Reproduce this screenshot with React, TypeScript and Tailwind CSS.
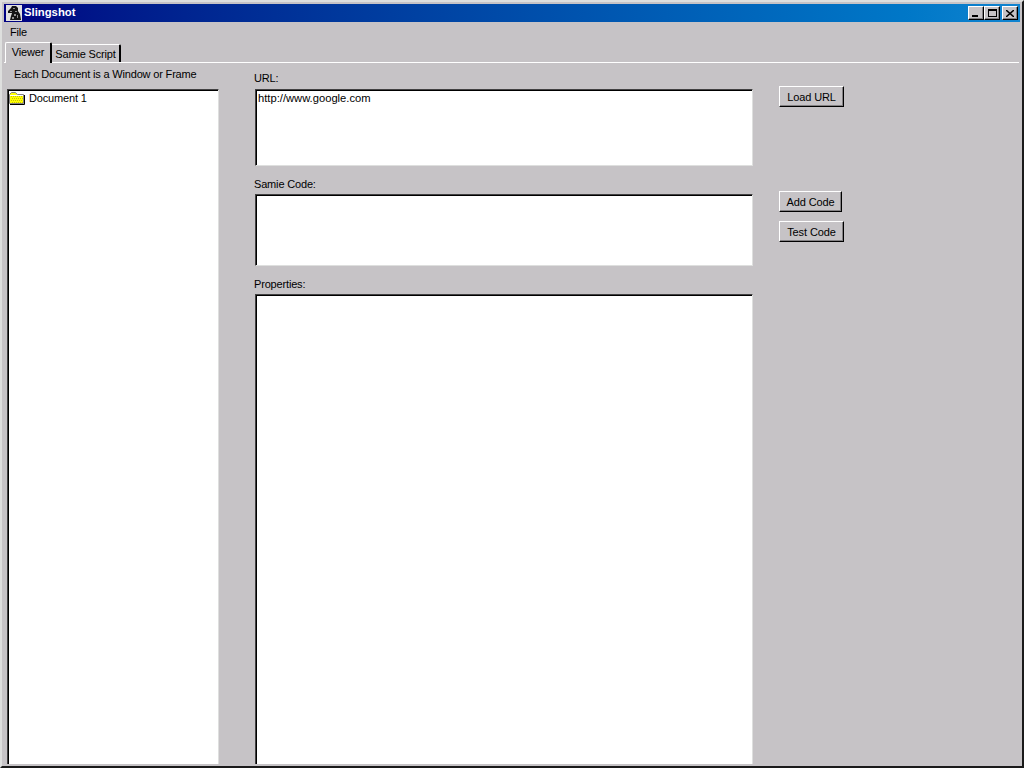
import React from 'react';

const raised =
  'border border-t-white border-l-white border-r-[#000000] border-b-[#000000] shadow-[inset_-1px_-1px_0_#848284]';
const sunken =
  'bg-white border border-t-[#424142] border-l-[#424142] border-r-[#dedfde] border-b-[#dedfde] shadow-[inset_1px_1px_0_#000000] pt-[1px] pl-[1px]';

const WinButton = ({ label, width }: { label: string; width: string }) => (
  <button className={`h-[21px] ${width} ${raised} bg-[#c6c3c6] text-[11px] tracking-[-0.1px] leading-[18px] text-black flex items-center justify-center whitespace-nowrap`}>
    {label}
  </button>
);

const CaptionButton = ({ children, className }: { children: React.ReactNode; className?: string }) => (
  <div className={`w-[16px] h-[14px] bg-[#c6c3c6] ${raised} flex items-center justify-center ${className ?? ''}`}>
    {children}
  </div>
);

const DogIcon = () => (
  <svg width="16" height="16" viewBox="0 0 16 16" className="shrink-0">
    <rect width="16" height="16" fill="#e0e0e0" />
    <path d="M2 6 L5 3 L6 1 L10 1 L12 3 L12 6 L14 9 L15 15 L4 15 L5 11 L6 8 L2 8 Z" fill="#141414" />
    <path d="M7 3h2v1H7zM4 6h2v1H4zM9 6h2v1H9zM8 9h2v2H8zM11 10h1v3h-1zM6 12h2v2H6z" fill="#909090" />
  </svg>
);

const FolderIcon = () => (
  <svg width="16" height="14" viewBox="0 0 16 14" className="shrink-0">
    <path d="M0.5 12.5 V3.5 L2.5 1.5 H6.5 L8.5 3.5 H14.5 V12.5 Z" fill="#ffff00" stroke="#848284" />
    <path d="M15.5 4 V13.5 H1" fill="none" stroke="#000000" />
    <path d="M1 4.5 H14" stroke="#ffffff" />
    <path d="M2 5h1v1H2zM4 5h1v1H4zM6 5h1v1H6zM8 5h1v1H8zM10 5h1v1h-1zM12 5h1v1h-1zM3 7h1v1H3zM5 7h1v1H5zM7 7h1v1H7zM9 7h1v1H9zM11 7h1v1h-1zM13 7h1v1h-1zM2 9h1v1H2zM4 9h1v1H4zM6 9h1v1H6zM8 9h1v1H8zM10 9h1v1h-1zM12 9h1v1h-1zM3 11h1v1H3zM5 11h1v1H5zM7 11h1v1H7zM9 11h1v1H9zM11 11h1v1h-1zM13 11h1v1h-1z" fill="#c6c300" />
  </svg>
);

export default function App() {
  return (
    <div
      className="w-[1024px] h-[768px] overflow-hidden bg-[#c6c3c6] text-black text-[11px] tracking-[-0.17px] border-2 border-t-[#dedfde] border-l-[#dedfde] border-r-[#1a1a1a] border-b-[#1a1a1a] p-[2px] pb-0 flex flex-col"
      style={{ fontFamily: '"Liberation Sans", Arial, sans-serif' }}
    >
      {/* title bar */}
      <div className="h-[18px] shrink-0 bg-gradient-to-r from-[#000082] to-[#1084d0] flex items-center pl-[2px] pr-[2px]">
        <DogIcon />
        <span className="ml-[2px] text-white font-bold text-[11.3px] tracking-normal leading-none">Slingshot</span>
        <div className="ml-auto flex items-center">
          <CaptionButton>
            <div className="w-[6px] h-[2px] bg-black mt-[6px] mr-[2px]" />
          </CaptionButton>
          <CaptionButton>
            <div className="w-[9px] h-[8px] border border-black border-t-2" />
          </CaptionButton>
          <CaptionButton className="ml-[2px]">
            <svg width="8" height="7" viewBox="0 0 8 7">
              <path d="M0 0 L8 7 M8 0 L0 7" stroke="#000000" strokeWidth="1.5" />
            </svg>
          </CaptionButton>
        </div>
      </div>

      {/* menu */}
      <div className="h-[20px] shrink-0 flex items-center pl-[6px] pt-[1px]">File</div>

      {/* tabs */}
      <div className="h-[21px] shrink-0 flex items-end border-b border-white pl-[1px] mr-[1px]">
        <div className="h-[21px] w-[47px] -mb-px pb-[2px] bg-[#c6c3c6] border-t border-l border-r-2 border-t-white border-l-white border-r-black rounded-tl-[2px] rounded-tr-[2px] flex items-center justify-center z-10 whitespace-nowrap">
          Viewer
        </div>
        <div className="h-[18px] w-[69px] pt-[1px] bg-[#c6c3c6] border-t border-r-2 border-t-white border-r-black rounded-tr-[2px] flex items-center justify-center whitespace-nowrap">
          Samie Script
        </div>
      </div>

      {/* content */}
      <div className="flex-1 min-h-0 flex">
        <div className="w-[212px] ml-[3px] shrink-0 flex flex-col">
          <div className="h-[26px] shrink-0 pl-[7px] pt-[3px] whitespace-nowrap">Each Document is a Window or Frame</div>
          <div className={`flex-1 ${sunken} border-b-0`}>
            <div className="flex items-center h-[14px]">
              <FolderIcon />
              <span className="ml-[4px]">Document 1</span>
            </div>
          </div>
        </div>

        <div className="w-[498px] ml-[36px] shrink-0 flex flex-col">
          <div className="h-[26px] shrink-0 pt-[7px] -ml-[1px]">URL:</div>
          <div className={`h-[77px] shrink-0 ${sunken} text-[11.2px] tracking-normal leading-[15px]`}>
            <span className="ml-[1px]">http://www.google.com</span>
          </div>
          <div className="h-[28px] shrink-0 pt-[10px] -ml-[1px]">Samie Code:</div>
          <div className={`h-[72px] shrink-0 ${sunken}`} />
          <div className="h-[28px] shrink-0 pt-[10px] -ml-[1px]">Properties:</div>
          <div className={`flex-1 ${sunken} border-b-0`} />
        </div>

        <div className="ml-[26px] flex flex-col items-start pt-[23px]">
          <WinButton label="Load URL" width="w-[65px]" />
          <div className="h-[84px]" />
          <WinButton label="Add Code" width="w-[63px]" />
          <div className="h-[9px]" />
          <WinButton label="Test Code" width="w-[65px]" />
        </div>
      </div>
      <div className="h-[2px] shrink-0" />
    </div>
  );
}
